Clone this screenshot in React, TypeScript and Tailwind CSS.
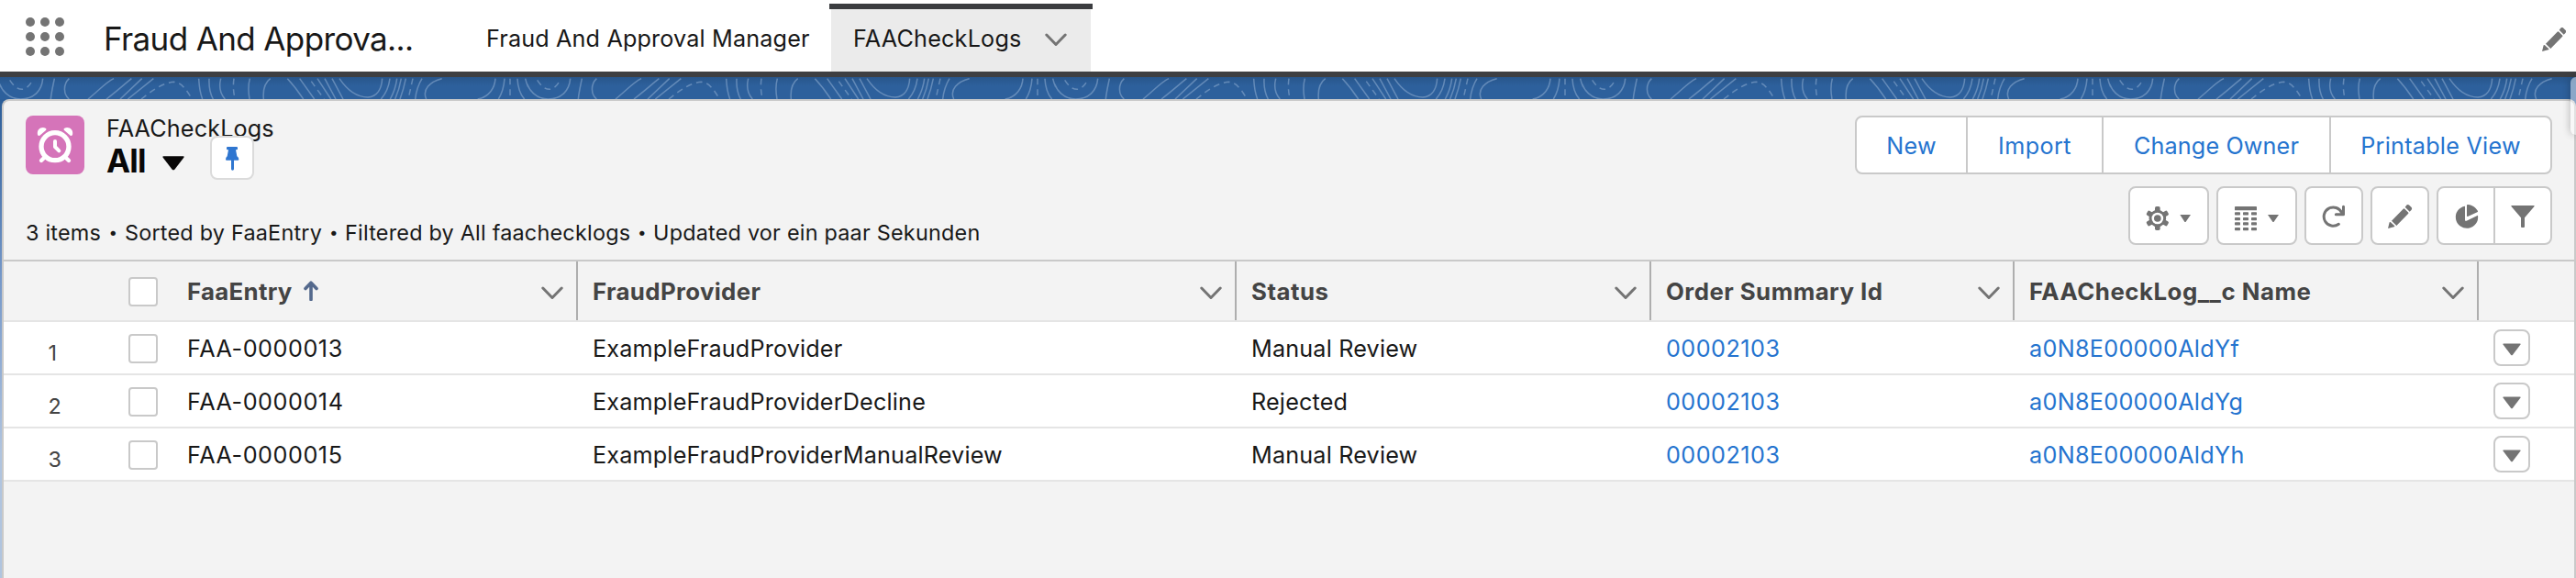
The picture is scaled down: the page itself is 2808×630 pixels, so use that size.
import React from "react";

const PENCIL = "M909 177 L914 157 Q916 155 918 157 L931 169 Q932 171 929 172 Z M921 152 L959 113 Q962 111 964 113 L976 125 Q977 128 975 129 L937 168 L921 152 Z M965 107 L971 100 Q975 97 979 101 L986 108 Q989 112 986 116 L980 122 Z";

const GridLauncher = () => (
  <svg width="42" height="42" viewBox="0 0 42 42" fill="#747474">
    {[5, 21, 37].map((y) => [5, 21, 37].map((x) => <circle key={`${x}-${y}`} cx={x} cy={y} r="5" />))}
  </svg>
);

const Chevron = ({ className = "" }: { className?: string }) => (
  <svg className={className} width="24" height="15" viewBox="0 0 24 15" fill="none" stroke="#747474" strokeWidth="3" strokeLinecap="round" strokeLinejoin="round">
    <path d="M1.8 2 L12 12.5 L22.2 2" />
  </svg>
);

const TopoLines = () => (
  <svg className="block h-6 w-full" aria-hidden="true">
    <defs>
      <pattern id="topo" width="575" height="24" patternUnits="userSpaceOnUse">
        <g transform="scale(0.33333)" fill="none" stroke="#85a5cb" strokeOpacity="0.62" strokeWidth="4.5">
          <path d="M-7 5 C2 45 30 72 68 72 C110 72 137 45 140 5 M1718 5 C1727 45 1750 72 1793 72" />
          <path d="M178 5 C174 25 168 50 166 72 M226 5 C205 25 208 58 226 72" />
          <path d="M372 5 C345 18 322 45 288 72 M430 5 C405 25 380 48 348 72 M464 5 L393 72 M502 5 L418 72" />
          <path d="M650 5 Q652 45 662 72 M684 5 Q682 45 697 72 M722 5 C716 30 720 55 736 72" />
          <path d="M817 5 Q809 35 816 72 M884 5 C864 20 860 50 862 72" />
          <path d="M940 5 C958 24 975 46 992 72 M980 5 L1028 72 M1038 5 L1082 72 M1062 5 L1098 72 M1086 5 L1122 72" />
          <path d="M1110 5 C1135 42 1165 66 1203 66 C1235 64 1248 36 1250 5" />
          <path d="M1275 5 Q1270 45 1246 72 M1298 5 Q1294 40 1276 72 M1312 5 Q1306 40 1292 72 M1327 5 Q1320 40 1308 72 M1380 5 Q1362 35 1358 72 M1445 5 C1405 15 1380 42 1394 72" />
          <path d="M1620 5 C1618 35 1600 66 1562 72 M1650 5 Q1647 45 1630 72 M1692 5 Q1694 48 1715 72" />
          <path d="M32 10 C45 30 58 40 72 40 C90 38 102 22 108 5 M462 72 C500 42 535 17 570 16 C595 18 612 45 628 72 M765 5 Q760 40 769 72 M1018 14 L1060 72 M1350 5 L1335 72 M1668 5 V72" strokeDasharray="20 15" />
        </g>
      </pattern>
    </defs>
    <rect width="100%" height="24" fill="url(#topo)" />
  </svg>
);

const AlarmIcon = () => (
  <svg className="shrink-0 rounded-lg bg-[#d574b9]" width="64" height="64" viewBox="84 138 192 192">
    <g fill="none" stroke="#fff" strokeLinecap="round" strokeLinejoin="round">
      <circle cx="180" cy="239" r="45" strokeWidth="16" />
      <path d="M180 222 V240 L193 253" strokeWidth="12" />
      <path d="M148 272 L135 285 M212 272 L225 285" strokeWidth="13" />
    </g>
    <g fill="#fff">
      <path d="M123 201 C119 184 134 173 149 179 Q154 182 150 186 L130 203 Q126 205 123 201 Z" />
      <path d="M237 201 C241 184 226 173 211 179 Q206 182 210 186 L230 203 Q234 205 237 201 Z" />
    </g>
  </svg>
);

const PinButton = () => (
  <button className="h-12 w-12 rounded-lg border-2 border-[#dbdbdb] bg-white">
    <svg className="block" width="44" height="44" viewBox="693 222 132 132" fill="#2f76d0">
      <path d="M744 252 H774 Q777 252 777 255 V259 Q777 262 774 262 H744 Q741 262 741 259 V255 Q741 252 744 252 Z M747 262 H771 L775 283 Q781 287 781 293 Q781 296 778 296 H741 Q738 296 738 293 Q738 287 743 283 Z M756 296 H765 V325 Q765 329 760.500 329 Q756 329 756 325 Z" />
    </svg>
  </button>
);

const GearIcon = () => (
  <svg className="block" width="84" height="60" viewBox="66 45 252 180" fill="#747474">
    <circle cx="155.500" cy="144" r="28" />
    {[0, 60, 120, 180, 240, 300].map((a) => (
      <rect key={a} x="147" y="105" width="17" height="24" rx="5" transform={`rotate(${a} 155.5 144)`} />
    ))}
    <circle cx="155.500" cy="144" r="19" fill="#fff" />
    <circle cx="155.500" cy="144" r="11.500" />
    <path d="M229 132 H264 L248 155 Q246 157 244 155 Z" />
  </svg>
);

const TableIcon = () => (
  <svg className="block" width="84" height="60" viewBox="354 45 252 180" fill="#747474">
    <rect x="408" y="105" width="72" height="13" rx="2" />
    {[124, 141, 157, 174].map((y) =>
      [408, 435, 462].map((x) => <rect key={`${x}-${y}`} x={x} y={y} width="18" height="9.500" rx="2" />)
    )}
    <path d="M516 132 H552 L536 155 Q534 157 532 155 Z" />
  </svg>
);

const RefreshIcon = () => (
  <svg className="block" width="60" height="60" viewBox="642 45 180 180" fill="none" stroke="#747474" strokeWidth="9" strokeLinecap="round">
    <path d="M748 163 A30.500 30.500 0 1 1 758 126" />
    <path d="M763.500 106 V131.500 H739" strokeLinejoin="round" />
  </svg>
);

const EditIcon = () => (
  <svg className="block" width="60" height="60" viewBox="858 45 180 180" fill="#747474">
    <path d={PENCIL} />
  </svg>
);

const ChartFilter = () => (
  <>
    <button className="h-15 w-[62px] border-r-2 border-[#c9c9c9]">
      <svg className="block" width="60" height="60" viewBox="1074 45 180 180" fill="#747474">
        <path d="M1161 104 V149 Q1161 154 1166 152 L1203 134 A36.500 36.500 0 1 1 1161 104 Z" />
        <path d="M1167 101 Q1167 98 1171 99 C1185 100 1197 109 1203 120 Q1204 123 1201 124 L1170 138 Q1167 139 1167 136 Z" />
      </svg>
    </button>
    <button className="h-15 w-[60px]">
      <svg className="block" width="60" height="60" viewBox="1260 45 180 180" fill="#747474">
        <path d="M1314 102 H1386 Q1390 102 1387 106 L1356 142 V171 Q1356 174 1353 174 H1347 Q1344 174 1344 171 V142 L1313 106 Q1310 102 1314 102 Z" />
      </svg>
    </button>
  </>
);

const Checkbox = () => <span className="block h-8 w-8 rounded-[4px] border-2 border-[#c9c9c9] bg-white" />;

const GRID = "grid grid-cols-[136px_49px_441px_718px_452px_396px_506px_1fr]";

const columns = [
  { label: "FaaEntry", cls: "pl-[15px] tracking-[0.3px]", sorted: true },
  { label: "FraudProvider", cls: "pl-[16px] tracking-[0.36px]" },
  { label: "Status", cls: "pl-[16px] tracking-[0.5px]" },
  { label: "Order Summary Id", cls: "pl-[16px] tracking-[0.46px]" },
  { label: "FAACheckLog__c Name", cls: "pl-[16px] tracking-[0.53px]" },
];

const rows = [
  { entry: "FAA-0000013", provider: "ExampleFraudProvider", status: "Manual Review", order: "00002103", name: "a0N8E00000AldYf" },
  { entry: "FAA-0000014", provider: "ExampleFraudProviderDecline", status: "Rejected", order: "00002103", name: "a0N8E00000AldYg" },
  { entry: "FAA-0000015", provider: "ExampleFraudProviderManualReview", status: "Manual Review", order: "00002103", name: "a0N8E00000AldYh" },
];

const actions = [
  { label: "New", cls: "w-[121px] border-r-2 tracking-[0.3px]" },
  { label: "Import", cls: "w-[148px] border-r-2 tracking-[0.4px]" },
  { label: "Change Owner", cls: "w-[248px] border-r-2 tracking-[0.14px]" },
  { label: "Printable View", cls: "w-[239px] tracking-[0.25px]" },
];

const toolButton = "h-16 rounded-lg border-2 border-[#c9c9c9] bg-white";

export default function App() {
  return (
    <div className="relative flex h-[630px] w-[2808px] flex-col overflow-hidden bg-white font-['Inter',sans-serif] text-[25.2px] whitespace-nowrap text-[#181818]">
      <nav className="flex h-[84px] shrink-0 border-b-6 border-[#3e3f42]">
        <div className="flex w-[113px] items-center pt-[2px] pl-7">
          <GridLauncher />
        </div>
        <div className="flex w-[417px] items-center pt-[6px] text-[35px] tracking-[-0.62px]">Fraud And Approva...</div>
        <a className="flex w-[374px] items-center pt-[7px] tracking-[0.15px]">Fraud And Approval Manager</a>
        <div className="mt-1 w-[287px] border-t-6 border-[#3b3d40] px-[2px]">
          <div className="flex h-full items-center bg-[#ebebeb] pb-[3px] pl-[24px]">
            <span className="w-[209px] tracking-[0.2px]">FAACheckLogs</span>
            <Chevron className="mt-[2px]" />
          </div>
        </div>
        <div className="flex flex-1 items-center justify-end pt-[8px] pr-[11px]">
          <svg width="26" height="26" viewBox="909 99 78 78" fill="#747474">
            <path d={PENCIL} />
          </svg>
        </div>
      </nav>

      <main className="flex flex-1 flex-col bg-linear-to-b from-[#2c5e99] from-5% via-[#7598c9] via-40% to-[#b0c4df] to-75%">
        <div className="h-6 shrink-0 bg-linear-to-b from-[#28568b] to-[#2d609c] to-40%">
          <TopoLines />
        </div>
        <section className="ml-[2px] flex flex-1 flex-col rounded-t-lg border-2 border-b-0 border-[#c9c9c9] bg-[#f3f3f3]">
          <header className="flex h-[173px] justify-between px-6 pt-4">
            <div>
              <div className="flex h-[74px] gap-[24px]">
                <AlarmIcon />
                <div>
                  <div className="h-[26px] leading-[29px] tracking-[0.14px]">FAACheckLogs</div>
                  <div className="flex h-12 items-center">
                    <h1 className="-mt-[2px] w-[61px] text-[35px] leading-[46px] font-bold tracking-[-0.8px] text-[#080707]">All</h1>
                    <svg className="mt-1" width="24" height="16" viewBox="531 270 72 48" fill="#080707">
                      <path d="M535 271 H599 Q604 271 601 275 L571 314 Q567 318 563 314 L533 275 Q530 271 535 271 Z" />
                    </svg>
                    <div className="ml-[28px]">
                      <PinButton />
                    </div>
                  </div>
                </div>
              </div>
              <p className="mt-[38px] flex items-center text-[23.4px] leading-[31px] tracking-[0.22px]">
                <span className="w-[83px]">3 items</span>
                <span className="w-[25px] text-center text-[17px]">•</span>
                <span className="w-[216px]">Sorted by FaaEntry</span>
                <span className="w-[24px] text-center text-[17px]">•</span>
                <span className="w-[312px]">Filtered by All faachecklogs</span>
                <span className="w-[24px] text-center text-[17px]">•</span>
                <span>Updated vor ein paar Sekunden</span>
              </p>
            </div>
            <div className="flex flex-col items-end gap-[13px]">
              <div className="flex h-16 rounded-lg border-2 border-[#c9c9c9] bg-white text-[#2574cf]">
                {actions.map((a) => (
                  <button key={a.label} className={`h-full border-[#c9c9c9] pt-[3px] ${a.cls}`}>
                    {a.label}
                  </button>
                ))}
              </div>
              <div className="flex gap-2">
                <button className={`w-[88px] ${toolButton}`}><GearIcon /></button>
                <button className={`w-[88px] ${toolButton}`}><TableIcon /></button>
                <button className={`w-16 ${toolButton}`}><RefreshIcon /></button>
                <button className={`w-16 ${toolButton}`}><EditIcon /></button>
                <div className={`flex w-[126px] ${toolButton}`}><ChartFilter /></div>
              </div>
            </div>
          </header>

          <div className={`${GRID} h-[68px] border-t-2 border-b-2 border-t-[#c9c9c9] border-b-[#e5e5e5] text-[25.8px] font-bold text-[#444]`}>
            <span />
            <div className="flex items-center pt-[2px]"><Checkbox /></div>
            {columns.map((c) => (
              <div key={c.label} className={`flex items-center justify-between border-r-2 border-[#aeaeae] pt-[3px] pr-[14px] ${c.cls}`}>
                <span className="flex items-center gap-3">
                  {c.label}
                  {c.sorted && (
                    <svg className="-mt-1" width="16" height="22" viewBox="0 0 16 22" fill="none" stroke="#54698d" strokeWidth="3.6" strokeLinecap="round" strokeLinejoin="round">
                      <path d="M2 8.500 L8 2.200 L14 8.500 M8 3 V20.500" />
                    </svg>
                  )}
                </span>
                <Chevron className="mt-px" />
              </div>
            ))}
            <span />
          </div>

          {rows.map((r, i) => (
            <div key={r.entry} className={`${GRID} h-[58px] items-center border-b-2 border-[#e5e5e5] bg-white`}>
              <span className="pt-[11px] pl-[48.5px] text-[23.4px] text-[#444]">{i + 1}</span>
              <div className="pt-[2px]"><Checkbox /></div>
              <span className="pt-[4px] pl-[15px] tracking-[0.55px]">{r.entry}</span>
              <span className="pt-[4px] pl-[16px] tracking-[0.17px]">{r.provider}</span>
              <span className="pt-[4px] pl-[16px] tracking-[0.17px]">{r.status}</span>
              <a className="pt-[4px] pl-[16px] tracking-[0.48px] text-[#2574cf]">{r.order}</a>
              <a className="pt-[4px] pl-[16px] tracking-[0.3px] text-[#2574cf]">{r.name}</a>
              <button className="ml-4 flex h-10 w-10 items-center justify-center rounded-lg border-2 border-[#c9c9c9] bg-white">
                <svg className="mt-1" width="20" height="14" viewBox="0 0 20 14" fill="#747474">
                  <path d="M1 0.500 H19 Q20.300 0.500 19.500 1.600 L11 12.800 Q10 13.800 9 12.800 L0.500 1.600 Q-0.300 0.500 1 0.500 Z" />
                </svg>
              </button>
            </div>
          ))}
        </section>
      </main>

      <div className="absolute top-[84px] right-0 h-[63px] w-[6px] rounded-l-lg bg-white/45 shadow-[0_0_8px_rgba(0,0,0,0.3)]" />
    </div>
  );
}
